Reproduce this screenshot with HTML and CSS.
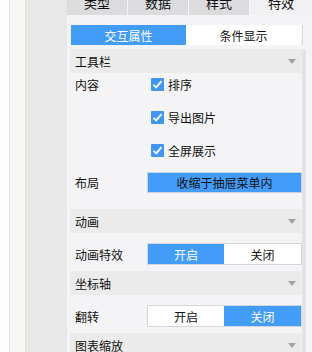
FILE: index.html
```html
<!DOCTYPE html>
<html lang="zh">
<head>
<meta charset="utf-8">
<link rel="stylesheet" href="styles.css">
</head>
<body>
<div class="app">
  <div class="edge"></div>
  <div class="rail"></div>
  <div class="sidebar"></div>
  <div class="panel">
    <div class="tabs">
      <div class="tab">类型</div>
      <div class="tab">数据</div>
      <div class="tab">样式</div>
      <div class="tab active">特效</div>
    </div>
    <div class="subtabs">
      <div class="subtab on">交互属性</div>
      <div class="subtab">条件显示</div>
    </div>
    <div class="content">
      <div class="sections">
        <div class="sec-head"><span>工具栏</span><i class="tri"></i></div>
        <div class="sec-body toolbar">
          <div class="row">
            <div class="label">内容</div>
            <div class="ctrl checks">
              <div class="check"><svg width="13" height="13" viewBox="0 0 13 13"><rect width="13" height="13" rx="1" fill="#3f97f3"/><path d="M2.5 6.8 L5.2 9.4 L10.5 3.2" fill="none" stroke="#fff" stroke-width="1.8"/></svg><span>排序</span></div>
              <div class="check"><svg width="13" height="13" viewBox="0 0 13 13"><rect width="13" height="13" rx="1" fill="#3f97f3"/><path d="M2.5 6.8 L5.2 9.4 L10.5 3.2" fill="none" stroke="#fff" stroke-width="1.8"/></svg><span>导出图片</span></div>
              <div class="check"><svg width="13" height="13" viewBox="0 0 13 13"><rect width="13" height="13" rx="1" fill="#3f97f3"/><path d="M2.5 6.8 L5.2 9.4 L10.5 3.2" fill="none" stroke="#fff" stroke-width="1.8"/></svg><span>全屏展示</span></div>
            </div>
          </div>
          <div class="row layout">
            <div class="label">布局</div>
            <div class="ctrl"><div class="select">收缩于抽屉菜单内</div></div>
          </div>
        </div>
        <div class="sec-head"><span>动画</span><i class="tri"></i></div>
        <div class="sec-body">
          <div class="row">
            <div class="label">动画特效</div>
            <div class="ctrl"><div class="toggle"><div class="opt on">开启</div><div class="opt">关闭</div></div></div>
          </div>
        </div>
        <div class="sec-head"><span>坐标轴</span><i class="tri"></i></div>
        <div class="sec-body">
          <div class="row">
            <div class="label">翻转</div>
            <div class="ctrl"><div class="toggle"><div class="opt">开启</div><div class="opt on">关闭</div></div></div>
          </div>
        </div>
        <div class="sec-head"><span>图表缩放</span><i class="tri"></i></div>
      </div>
      <div class="scrollbar"></div>
    </div>
  </div>
</div>
</body>
</html>
```
FILE: styles.css
```css
html, body {
  margin: 0;
  padding: 0;
}
body {
  width: 312px;
  height: 352px;
  overflow: hidden;
  font-family: "Noto Sans CJK SC", "Noto Sans", sans-serif;
  font-size: 12px;
  color: #111;
  background: #fff;
}
.app {
  display: flex;
  height: 352px;
}
.edge {
  width: 9px;
  background: #fefefe;
  border-right: 1px solid #e4e4e0;
}
.rail {
  width: 15px;
  background: #f6f6f3;
  border-right: 1px solid #e2e2de;
}
.sidebar {
  width: 41px;
  background: #e8e8e8;
}
.panel {
  flex: 1;
  background: #f4f4f6;
  display: flex;
  flex-direction: column;
  min-width: 0;
  overflow: hidden;
}
.panel > * {
  flex-shrink: 0;
}
.tabs {
  display: grid;
  grid-template-columns: 60px 60px 60px 1fr;
  column-gap: 1px;
  height: 26px;
  margin-top: -11px;
  background: #f4f4f6;
}
.tab {
  background: #dcdcdf;
  display: flex;
  align-items: center;
  justify-content: center;
  font-size: 13px;
}
.tab.active {
  background: #f1f1f3;
}
.subtabs {
  display: grid;
  grid-template-columns: 115px 115px;
  margin: 10px 0 0 4px;
  width: 231px;
  height: 20px;
  border-right: 1px solid #dcdce0;
}
.subtab {
  background: #fff;
  display: flex;
  align-items: center;
  justify-content: center;
}
.subtab.on {
  background: #439cf7;
  color: #fff;
}
.content {
  display: flex;
  margin-top: 4px;
  margin-left: 3px;
}
.sections {
  width: 232px;
  flex-shrink: 0;
}
.scrollbar {
  width: 4px;
  height: 320px;
  background: #e3e3e6;
  border-radius: 2px 2px 0 0;
  flex-shrink: 0;
}
.sec-head {
  height: 24px;
  background: #ebebec;
  display: flex;
  align-items: center;
  justify-content: space-between;
  padding: 0 6px 0 5px;
}
.tri {
  width: 0;
  height: 0;
  border-left: 4px solid transparent;
  border-right: 4px solid transparent;
  border-top: 5px solid #a2a2a4;
}
.sec-body {
  padding: 10px 0 6px 0;
}
.sec-body.toolbar {
  padding: 0 0 16px 0;
}
.row {
  display: flex;
  align-items: flex-start;
}
.label {
  width: 72px;
  padding-left: 5px;
  height: 22px;
  display: flex;
  align-items: center;
  flex-shrink: 0;
}
.ctrl {
  flex: 1;
}
.checks {
  display: flex;
  flex-direction: column;
  gap: 11px;
  padding-left: 4px;
}
.check {
  height: 22px;
  display: flex;
  align-items: center;
  gap: 4px;
}
.check svg {
  display: block;
}
.row.layout {
  margin-top: 10px;
  align-items: center;
}
.select {
  height: 19px;
  margin-top: 1px;
  background: #439cf7;
  border: 1px solid #c9d3e0;
  box-sizing: content-box;
  display: flex;
  align-items: center;
  justify-content: center;
  color: #111;
}
.toggle {
  display: grid;
  grid-template-columns: 76px 77px;
  height: 20px;
  border: 1px solid #d6d6da;
  width: 153px;
}
.opt {
  background: #fff;
  display: flex;
  align-items: center;
  justify-content: center;
}
.opt.on {
  background: #439cf7;
  color: #fff;
}
```
